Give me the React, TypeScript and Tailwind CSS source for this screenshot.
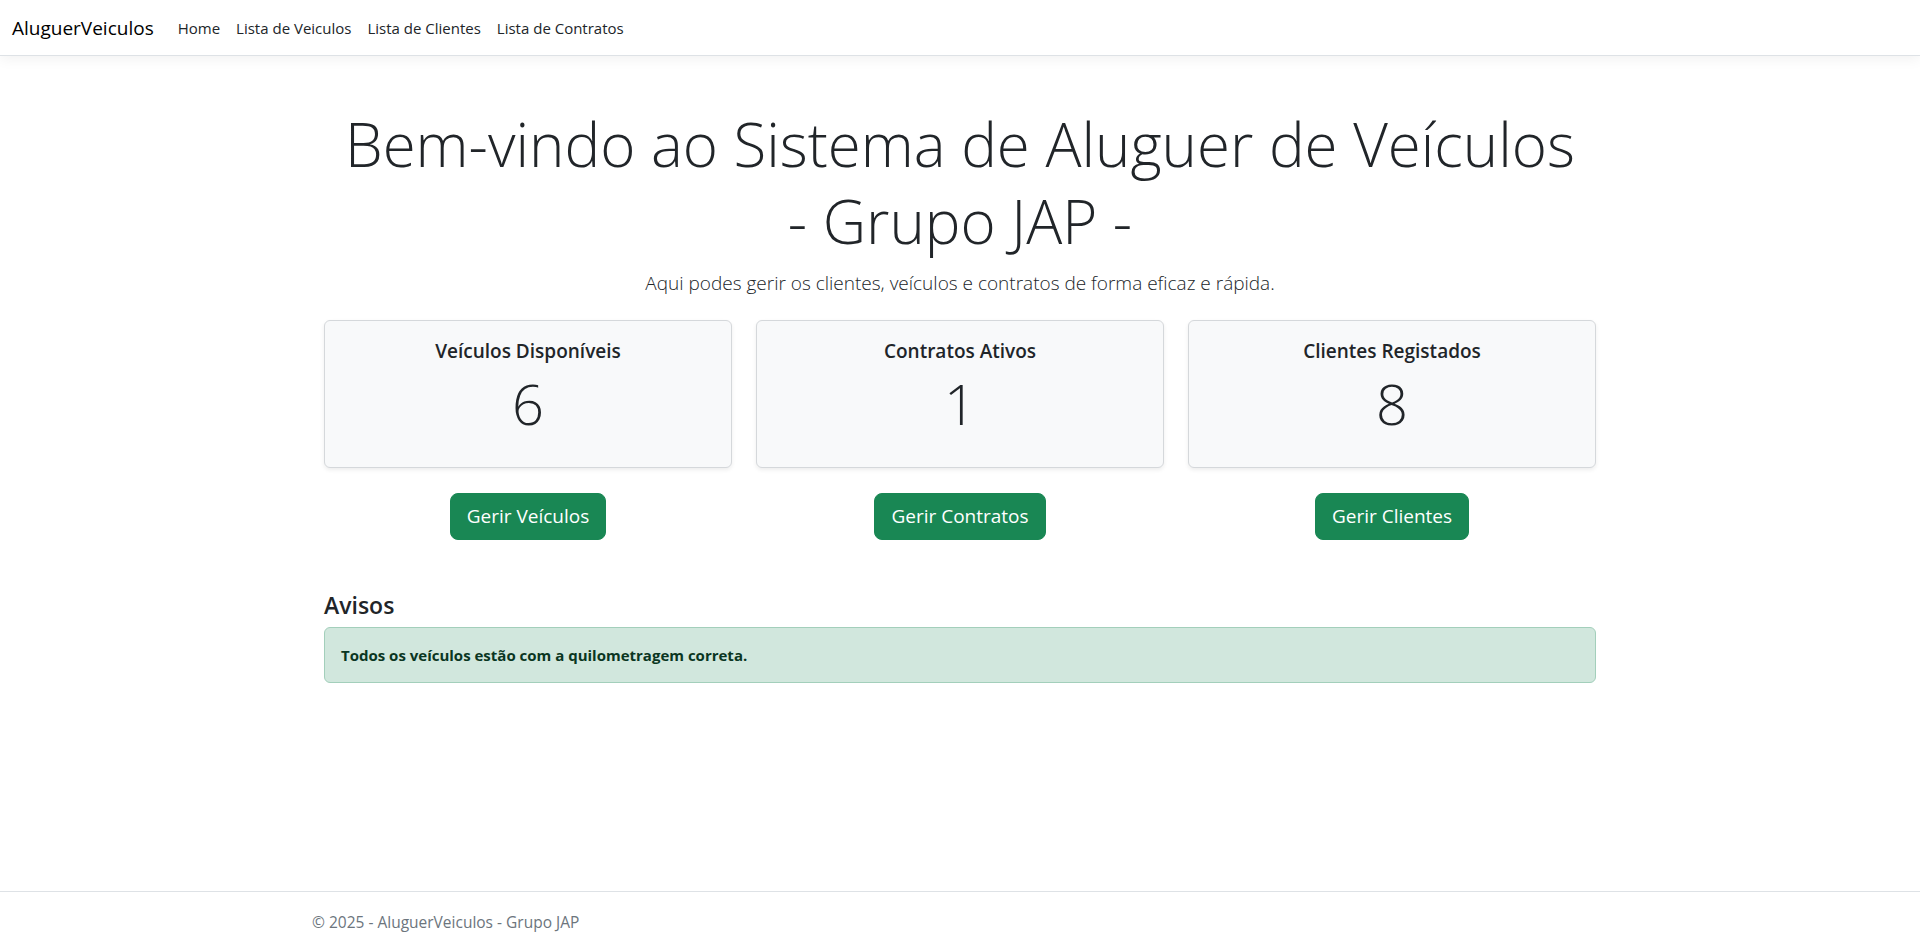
import React from 'react';

const stats = [
  { title: 'Veículos Disponíveis', value: 6, action: 'Gerir Veículos' },
  { title: 'Contratos Ativos', value: 1, action: 'Gerir Contratos' },
  { title: 'Clientes Registados', value: 8, action: 'Gerir Clientes' },
];

const links = ['Home', 'Lista de Veiculos', 'Lista de Clientes', 'Lista de Contratos'];

export default function App() {
  return (
    <div className="min-h-screen flex flex-col bg-white text-[#212529] font-['Open_Sans','Noto_Sans',sans-serif]">
      <header>
        <nav className="h-[56px] bg-white border-b border-[#dee2e6] shadow-[0_0.25rem_0.75rem_rgba(0,0,0,0.05)] flex items-center px-3">
          <a className="text-[19px] leading-[30px] py-[5px] mr-4 text-black">AluguerVeiculos</a>
          <ul className="flex items-center">
            {links.map((l) => (
              <li key={l}>
                <a className="block px-2 py-2 text-[15px] leading-6 text-[#212529]">{l}</a>
              </li>
            ))}
          </ul>
        </nav>
      </header>

      <main className="w-[1320px] mx-auto px-3 pb-3">
        <div className="text-center mt-[50px]">
          <h1 className="text-[60px] leading-[76.8px] font-light mb-2">
            Bem-vindo ao Sistema de Aluguer de Veículos
            <br />- Grupo JAP -
          </h1>
          <p className="text-[19px] leading-[30px] font-light">
            Aqui podes gerir os clientes, veículos e contratos de forma eficaz e rápida.
          </p>
        </div>

        <div className="px-3 mt-[22px]">
          <div className="grid grid-cols-3 gap-6">
            {stats.map((s) => (
              <div
                key={s.title}
                className="h-[148px] bg-[#f8f9fa] border border-[#d5d8db] rounded-md shadow-[0_0.125rem_0.25rem_rgba(0,0,0,0.075)] pt-[18px] text-center"
              >
                <h5 className="text-[19px] leading-6 font-semibold mb-[7px]">{s.title}</h5>
                <p className="text-[56px] leading-[67.2px] font-light">{s.value}</p>
              </div>
            ))}
          </div>

          <div className="grid grid-cols-3 gap-6 mt-[25px]">
            {stats.map((s) => (
              <div key={s.action} className="flex justify-center">
                <button className="bg-[#198754] text-white text-[19px] leading-[29px] px-4 py-2 border border-[#198754] rounded-lg">
                  {s.action}
                </button>
              </div>
            ))}
          </div>

          <h4 className="text-[23px] leading-[28.8px] font-semibold mt-[51px] mb-2">Avisos</h4>
          <div className="bg-[#d1e7dd] border border-[#a3cfbb] rounded-md px-4 py-[16px] text-[#0a3622] text-[15px] leading-[22px] font-bold">
            Todos os veículos estão com a quilometragem correta.
          </div>
        </div>
      </main>

      <footer className="mt-auto border-t border-[#dee2e6] text-[#6c757d]">
        <div className="w-[1320px] mx-auto px-3 leading-[60px] text-[15.5px] whitespace-nowrap">
          © 2025 - AluguerVeiculos - Grupo JAP
        </div>
      </footer>
    </div>
  );
}
